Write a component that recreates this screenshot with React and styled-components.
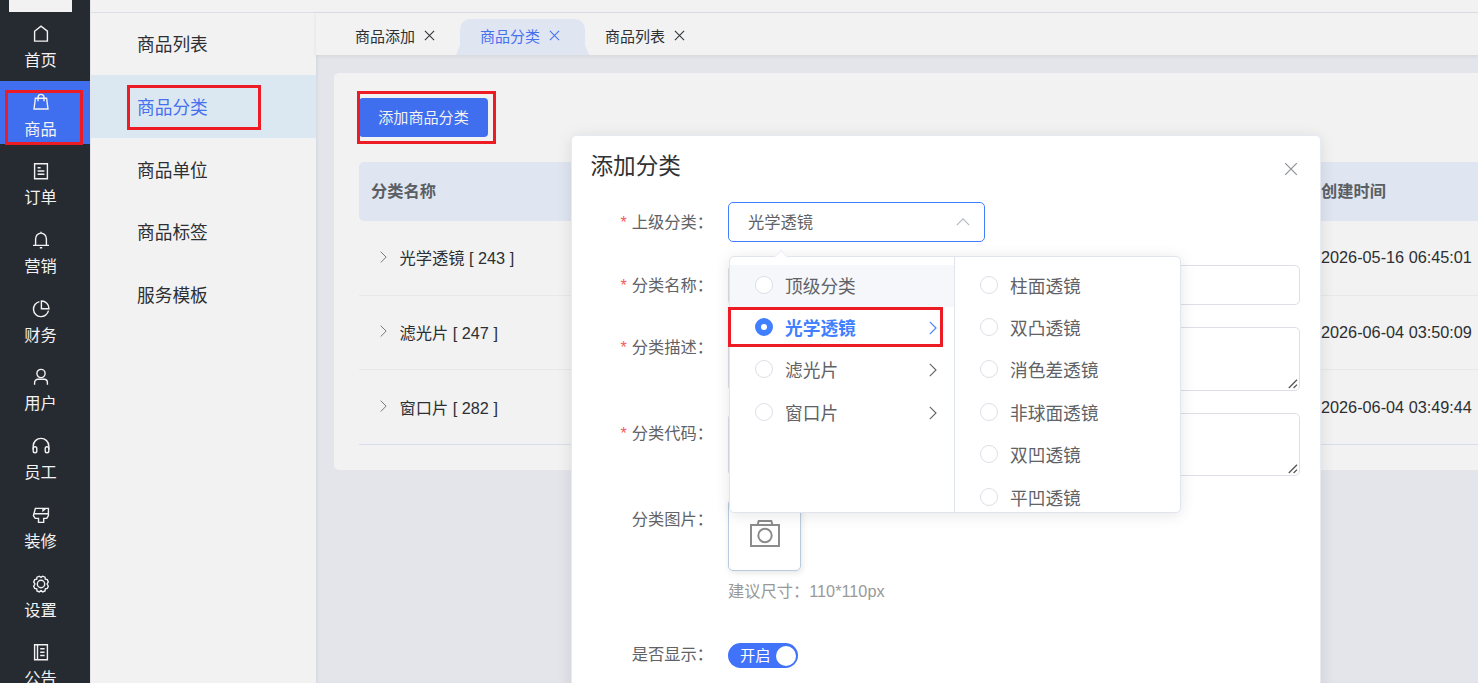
import React from 'react'
import styled, { createGlobalStyle } from 'styled-components'

const GlobalStyle = createGlobalStyle`
    * {
        box-sizing: border-box;
    }
    body {
        margin: 0;
        overflow: hidden;
        font-family: 'Liberation Sans', 'Noto Sans CJK SC', sans-serif;
        font-size: 16.25px;
        color: #303133;
        background: #e4e5ea;
    }
`

const navItems = [
    { label: '首页', icon: <path d="M3.6 7.2 10 2.2l6.4 5v9.9H3.6z" /> },
    {
        label: '商品',
        active: true,
        icon: <path d="M4.4 6.2h11.2L17 17H3zM7 9.2V5.6a3 3.2 0 0 1 6 0v3.6" />,
    },
    {
        label: '订单',
        icon: <path d="M3.6 2.7h12.8v15H3.6zM6.6 6.8h3M6.6 10h6.8M6.6 13.2h6.8" />,
    },
    {
        label: '营销',
        icon: <path d="M2 15.4h16M4.6 15.4V9a5.4 5.9 0 0 1 10.8 0v6.4M10 3.1V1.8M8.8 17.8h2.4" />,
    },
    {
        label: '财务',
        icon: <path d="M8.4 2.6a7.6 7.6 0 1 0 9.1 9.1M10.4 2v7.7H18A7.6 7.6 0 0 0 10.4 2z" />,
    },
    {
        label: '用户',
        icon: (
            <>
                <circle cx="10" cy="6.5" r="4.1" />
                <path d="M3.6 17.8v-2.3a3.2 3.2 0 0 1 3.2-3.2h6.4a3.2 3.2 0 0 1 3.2 3.2v2.3" />
            </>
        ),
    },
    {
        label: '员工',
        icon: (
            <>
                <path d="M2.2 13.4V10a7.8 7.6 0 0 1 15.6 0v3.4" />
                <rect x="2.2" y="10.8" width="3.6" height="6" rx="1.8" />
                <rect x="14.2" y="10.8" width="3.6" height="6" rx="1.8" />
            </>
        ),
    },
    {
        label: '装修',
        icon: <path d="M4.4 3.4h13v7.2l-1.6 2.8h-3.1v4H7.5v-4H4.2l-1.8-2.8zM2.8 8.8h14.6M12 3.6v2.2l2.4-2" />,
    },
    {
        label: '设置',
        icon: (
            <>
                <path d="M8.3 2.2 10 3.4l1.7-1.2 2.3 1 .3 2 2 .4 1 2.3-1.2 2.1 1.2 2.2-1 2.3-2 .4-.3 2-2.3 1-1.7-1.2-1.7 1.2-2.3-1-.3-2-2-.4-1-2.3L3.900 10 2.700 7.900l1-2.300 2-.4.3-2z" />
                <circle cx="10" cy="10" r="3.7" />
            </>
        ),
    },
    {
        label: '公告',
        icon: <path d="M3.6 2.7h12.8v15H3.6zM6.5 2.7v15M9.2 6.7h4.4M9.2 10.2h4.4M9.2 13.5h4.4" />,
    },
]

const subItems = ['商品列表', '商品分类', '商品单位', '商品标签', '服务模板']

const tabs = ['商品添加', '商品分类', '商品列表']

const rows = [
    { name: '光学透镜 [ 243 ]', time: '2026-05-16 06:45:01' },
    { name: '滤光片 [ 247 ]', time: '2026-06-04 03:50:09' },
    { name: '窗口片 [ 282 ]', time: '2026-06-04 03:49:44' },
]

const parents = [
    { label: '顶级分类', hover: true },
    { label: '光学透镜', checked: true, more: true },
    { label: '滤光片', more: true },
    { label: '窗口片', more: true },
]

const children = ['柱面透镜', '双凸透镜', '消色差透镜', '非球面透镜', '双凹透镜', '平凹透镜']

const Cross = ({ size, color }) => (
    <Stroke viewBox="0 0 12 12" $w={size} $color={color}>
        <path d="M1 1l10 10M11 1L1 11" />
    </Stroke>
)

const Chevron = ({ size, color }) => (
    <Stroke viewBox="0 0 8 14" $w={size} $color={color}>
        <path d="M.8.8L7 7 .8 13.2" />
    </Stroke>
)

const Grip = () => (
    <GripSvg viewBox="0 0 10 10">
        <path d="M.8 9L9 .8M5.6 9L9 5.6" />
    </GripSvg>
)

const App = () => {
    return (
        <Page>
            <GlobalStyle />
            <Sidebar>
                <Logo />
                {navItems.map((item) => (
                    <NavItem key={item.label} $active={item.active}>
                        <NavIcon viewBox="0 0 20 20">{item.icon}</NavIcon>
                        <NavLabel $active={item.active}>{item.label}</NavLabel>
                    </NavItem>
                ))}
            </Sidebar>
            <SubMenu>
                <SubTop />
                {subItems.map((item) => (
                    <SubItem key={item} $active={item === '商品分类'}>{item}</SubItem>
                ))}
            </SubMenu>
            <Main>
                <TopStrip />
                <TabBar>
                    {tabs.map((tab) => (
                        <Tab key={tab} $active={tab === '商品分类'}>
                            {tab}
                            <Cross size="11px" color="currentColor" />
                        </Tab>
                    ))}
                </TabBar>
                <Card>
                    <AddButton>添加商品分类</AddButton>
                    <Table>
                        <HeadRow>
                            <Cell $head>分类名称</Cell>
                            <Cell $head>创建时间</Cell>
                        </HeadRow>
                        {rows.map((row) => (
                            <Row key={row.name}>
                                <Cell $name>
                                    <Chevron size="7px" color="#707276" />
                                    {row.name}
                                </Cell>
                                <Cell>{row.time}</Cell>
                            </Row>
                        ))}
                    </Table>
                </Card>
            </Main>

            <Modal>
                <ModalHead>
                    添加分类
                    <Cross size="14px" color="#909399" />
                </ModalHead>
                <Field $height="40px" $gap="23px">
                    <Label $required>上级分类：</Label>
                    <Select>
                        光学透镜
                        <Stroke viewBox="0 0 14 8" $w="14px" $color="#b4b8c0">
                            <path d="M.8 7.2L7 .8l6.2 6.4" />
                        </Stroke>
                    </Select>
                </Field>
                <Field $height="40px" $gap="22px">
                    <Label $required>分类名称：</Label>
                    <Input />
                </Field>
                <Field $height="64px" $gap="22px">
                    <Label $required>分类描述：</Label>
                    <Input><Grip /></Input>
                </Field>
                <Field $height="63px" $gap="23px">
                    <Label $required>分类代码：</Label>
                    <Input><Grip /></Input>
                </Field>
                <Field $height="144px" $gap="0">
                    <Label>分类图片：</Label>
                    <div>
                        <Upload>
                            <Stroke viewBox="0 0 30 27" $w="30px" $color="#8c8c8c" $thick={2}>
                                <path d="M1 5h28v21H1zM7.5 5l1.2-4h12.6l1.2 4" />
                                <circle cx="15" cy="15.5" r="6.7" />
                            </Stroke>
                        </Upload>
                        <Hint>建议尺寸：110*110px</Hint>
                    </div>
                </Field>
                <Field $height="25px" $gap="0">
                    <Label $line="23px">是否显示：</Label>
                    <Switch>开启<Knob /></Switch>
                </Field>
            </Modal>

            <Dropdown>
                <Column $divided>
                    {parents.map((item) => (
                        <Option key={item.label} $hover={item.hover} $checked={item.checked}>
                            <Radio $checked={item.checked} />
                            <OptionText>{item.label}</OptionText>
                            {item.more && (
                                <Chevron size="8px" color={item.checked ? '#407fff' : '#606266'} />
                            )}
                        </Option>
                    ))}
                </Column>
                <Column>
                    {children.map((label) => (
                        <Option key={label}>
                            <Radio />
                            <OptionText>{label}</OptionText>
                        </Option>
                    ))}
                </Column>
            </Dropdown>

            <Marker $x={5} $y={90} $w={78} $h={55} />
            <Marker $x={127} $y={85} $w={134} $h={45} />
            <Marker $x={357} $y={91} $w={139} $h={53} />
            <Marker $x={728} $y={307} $w={215} $h={40} />
        </Page>
    )
}

const Page = styled.div`
    position: relative;
    display: flex;
    width: 1478px;
    height: 683px;
    overflow: hidden;
`

const Stroke = styled.svg`
    flex: none;
    width: ${(p) => p.$w};
    fill: none;
    stroke: ${(p) => p.$color};
    stroke-width: ${(p) => p.$thick || 1.1};
`

/* left navigation */
const Sidebar = styled.div`
    flex: none;
    width: 90px;
    height: 683px;
    overflow: hidden;
    background: #262b32;
`

const Logo = styled.div`
    width: 63px;
    height: 12px;
    margin-left: 9px;
    background: #f2f2f2;
`

const NavItem = styled.div`
    display: flex;
    flex-direction: column;
    align-items: center;
    height: 63px;
    margin-bottom: 5.75px;
    padding: ${(p) => (p.$active ? '11px' : '11.6px')} 9px 0 0;
    color: #f2f2f2;
    background: ${(p) => (p.$active ? '#3f6eee' : 'transparent')};
`

const NavIcon = styled.svg`
    flex: none;
    width: 20px;
    height: 20px;
    fill: none;
    stroke: currentColor;
    stroke-width: 1.4;
`

const NavLabel = styled.span`
    margin-top: ${(p) => (p.$active ? '6px' : '5px')};
    font-size: 16.25px;
    line-height: 22px;
`

const SubMenu = styled.div`
    flex: none;
    width: 226px;
    height: 683px;
    background: #f2f2f2;
    border-left: 1px solid #e2e4e9;
`

const SubTop = styled.div`
    height: 13px;
    margin-bottom: -0.6px;
    border-bottom: 1px solid #dcdfe9;
`

const SubItem = styled.div`
    height: 62.6px;
    padding-left: 46px;
    font-size: 17.7px;
    line-height: 66px;
    color: ${(p) => (p.$active ? '#4670ee' : '#2d2f33')};
    background: ${(p) => (p.$active ? '#dce8f1' : 'transparent')};
`

/* content */
const Main = styled.div`
    flex: 1;
    min-width: 0;
    box-shadow: inset 2px 0 2px #dadce3;
`

const TopStrip = styled.div`
    height: 13px;
    background: #f2f2f2;
    border-bottom: 1px solid #dcdfe9;
`

const TabBar = styled.div`
    display: flex;
    align-items: flex-end;
    height: 42px;
    padding-left: 19px;
    background: #f2f2f2;
    box-shadow: 0 1px 4px rgba(0, 21, 41, 0.08);
`

const Tab = styled.div`
    position: relative;
    display: flex;
    align-items: center;
    gap: 9px;
    width: 125px;
    height: 36px;
    padding: 0 0 3px 20px;
    font-size: 15px;
    color: ${(p) => (p.$active ? '#4670ee' : '#2d2f33')};
    background: ${(p) => (p.$active ? '#dfe5f1' : 'transparent')};
    border-radius: 10px 10px 0 0;

    &::before,
    &::after {
        content: '';
        display: ${(p) => (p.$active ? 'block' : 'none')};
        position: absolute;
        bottom: 0;
        width: 4px;
        height: 10px;
        background: #dfe5f1;
    }
    &::before {
        left: -4px;
        clip-path: polygon(100% 0, 100% 100%, 0 100%);
    }
    &::after {
        right: -4px;
        clip-path: polygon(0 0, 100% 100%, 0 100%);
    }
`

const Card = styled.div`
    height: 397px;
    margin: 18px 0 0 18px;
    padding: 25px 0 0 25px;
    background: #f2f2f2;
    border-radius: 5px 0 0 5px;
`

const AddButton = styled.button`
    display: block;
    width: 129px;
    height: 39px;
    padding: 0 0 3px;
    border: 0;
    border-radius: 4px;
    font-family: inherit;
    font-size: 15.1px;
    color: #f2f2f2;
    background: #3f6eee;
`

const Table = styled.div`
    margin-top: 25px;
`

const HeadRow = styled.div`
    display: grid;
    grid-template-columns: 950px 1fr;
    height: 59px;
    padding-left: 12px;
    background: #dfe5f1;
    border-radius: 5px 0 0 5px;
`

const Row = styled.div`
    display: grid;
    grid-template-columns: 941px 1fr;
    height: 74.5px;
    padding-left: 21px;
    border-bottom: 1px solid #e7e8eb;

    &:last-child {
        padding-top: 1px;
        border-bottom-color: #d8deec;
    }
`

const Cell = styled.div`
    display: flex;
    align-items: center;
    gap: 12.5px;
    padding-bottom: ${(p) => (p.$head ? '4px' : p.$name ? '1.5px' : '0')};
    white-space: nowrap;
    font-weight: ${(p) => (p.$head ? 700 : 400)};
    color: ${(p) => (p.$head ? '#5b5e63' : '#2d2f33')};
`

/* dialog */
const Modal = styled.div`
    position: absolute;
    left: 571px;
    top: 135px;
    width: 750px;
    height: 640px;
    padding: 0 20px;
    color: #606266;
    background: #fff;
    border: 1px solid #e6eaf4;
    border-radius: 5px;
    box-shadow: 0 2px 15px rgba(0, 0, 0, 0.1);
`

const ModalHead = styled.div`
    display: flex;
    align-items: center;
    justify-content: space-between;
    height: 66px;
    padding: 0 2px 10px 0;
    margin-left: -1.5px;
    font-size: 22.6px;
    color: #303133;

    svg {
        margin-top: 10px;
    }
`

const Field = styled.div`
    display: flex;
    height: ${(p) => p.$height};
    margin-bottom: ${(p) => p.$gap};
`

const Label = styled.div`
    flex: none;
    width: 136px;
    padding-right: 15px;
    text-align: right;
    line-height: ${(p) => p.$line || '40px'};
    white-space: nowrap;

    &::before {
        content: ${(p) => (p.$required ? "'*'" : 'none')};
        margin-right: 5px;
        color: #f75a5a;
    }
`

const Select = styled.div`
    display: flex;
    align-items: center;
    justify-content: space-between;
    width: 257px;
    height: 40px;
    padding: 0 14px 2px 19px;
    border: 1px solid #407fff;
    border-radius: 5px;

    svg {
        margin-top: 2px;
    }
`

const Input = styled.div`
    display: flex;
    align-items: flex-end;
    justify-content: flex-end;
    width: 573px;
    height: 100%;
    border: 1px solid #dcdfe6;
    border-radius: 5px;
`

const GripSvg = styled.svg`
    width: 10px;
    height: 10px;
    margin: 0 1px 1px 0;
    fill: none;
    stroke: #555;
    stroke-width: 1.3;
`

const Upload = styled.div`
    display: flex;
    align-items: center;
    justify-content: center;
    width: 73px;
    height: 72px;
    padding-bottom: 4px;
    border: 1px solid #b9cadc;
    border-radius: 5px;
    box-shadow: 1px 2px 6px rgba(0, 0, 0, 0.1);
`

const Hint = styled.div`
    margin-top: 8px;
    line-height: 24px;
    color: #999;
`

const Switch = styled.div`
    display: flex;
    align-items: center;
    justify-content: space-between;
    width: 70px;
    height: 25px;
    padding: 0 2px 0 12px;
    font-size: 15.2px;
    line-height: 22px;
    color: #fff;
    background: #4073fa;
    border-radius: 13px;
`

const Knob = styled.span`
    width: 20px;
    height: 20px;
    background: #fff;
    border-radius: 50%;
`

/* cascader popup */
const Dropdown = styled.div`
    position: absolute;
    left: 729px;
    top: 256px;
    display: flex;
    width: 452px;
    height: 257px;
    background: #fff;
    border: 1px solid #dfe4ed;
    border-radius: 5px;
    box-shadow: 0 2px 15px rgba(0, 0, 0, 0.1);

    &::before {
        content: '';
        position: absolute;
        left: 46px;
        top: -5px;
        width: 9px;
        height: 9px;
        background: #fff;
        border: 1px solid #e9edf6;
        border-width: 1px 0 0 1px;
        transform: rotate(45deg);
    }
`

const Column = styled.div`
    width: 225px;
    height: 255px;
    padding-top: 8px;
    overflow: hidden;
    border-right: ${(p) => (p.$divided ? '1px solid #dfe4ed' : '0')};
`

const Option = styled.div`
    display: flex;
    align-items: center;
    height: 42.4px;
    padding: 0 17px 3px 25px;
    font-size: 17.7px;
    font-weight: ${(p) => (p.$checked ? 700 : 400)};
    color: ${(p) => (p.$checked ? '#407fff' : '#606266')};
    background: ${(p) => (p.$hover ? '#f5f7fa' : 'transparent')};

    svg {
        margin-top: 2px;
    }
`

const Radio = styled.span`
    flex: none;
    width: 18px;
    height: 18px;
    margin-right: 12px;
    border: ${(p) => (p.$checked ? '6px solid #407fff' : '1px solid #dcdfe6')};
    border-radius: 50%;
    background: #fff;
`

const OptionText = styled.span`
    flex: 1;
`

/* red frames around the steps to follow */
const Marker = styled.div`
    position: absolute;
    left: ${(p) => p.$x}px;
    top: ${(p) => p.$y}px;
    width: ${(p) => p.$w}px;
    height: ${(p) => p.$h}px;
    border: 3px solid #ed1c24;
`

export default App
